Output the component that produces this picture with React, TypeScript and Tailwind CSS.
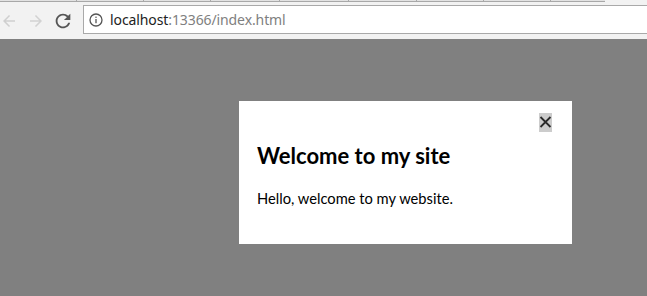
import React from "react";

const TAB_EDGES = [76, 143, 210, 279, 348, 416, 483, 550];

function BackIcon({ color }: { color: string }) {
  return (
    <svg width="18" height="18" viewBox="0 0 24 24">
      <path fill={color} d="M20 11H7.83l5.59-5.59L12 4l-8 8 8 8 1.41-1.41L7.83 13H20v-2z" />
    </svg>
  );
}

function ForwardIcon({ color }: { color: string }) {
  return (
    <svg width="18" height="18" viewBox="0 0 24 24">
      <path fill={color} d="M4 11h12.17l-5.59-5.59L12 4l8 8-8 8-1.41-1.41L16.17 13H4v-2z" />
    </svg>
  );
}

function ReloadIcon() {
  return (
    <svg width="22" height="22" viewBox="0 0 24 24">
      <path
        fill="#555"
        d="M17.65 6.35C16.2 4.9 14.21 4 12 4c-4.42 0-7.99 3.58-7.99 8s3.570 8 7.99 8c3.73 0 6.84-2.55 7.73-6h-2.08c-.82 2.33-3.04 4-5.65 4-3.31 0-6-2.69-6-6s2.69-6 6-6c1.66 0 3.14.69 4.22 1.78L13 11h7V4l-2.35 2.35z"
      />
    </svg>
  );
}

function InfoIcon() {
  return (
    <svg width="14" height="14" viewBox="0 0 14 14">
      <circle cx="7" cy="7" r="6" fill="none" stroke="#555" strokeWidth="1.3" />
      <rect x="6.35" y="6" width="1.3" height="4.2" fill="#555" />
      <rect x="6.35" y="3.6" width="1.3" height="1.3" fill="#555" />
    </svg>
  );
}

export default function App() {
  return (
    <div className="flex h-[296px] w-[647px] flex-col overflow-hidden bg-[#808080] font-['Lato',sans-serif]">

      {/* Browser chrome */}
      <div className="flex h-[39px] shrink-0 flex-col bg-[#f2f2f2]">
        {/* tab strip */}
        <div className="relative h-[2px] w-[605px] border-b border-[#a8a8a8] bg-[#e2e2e2]">
          {TAB_EDGES.map(x => (
            <div key={x} className="absolute top-0 h-[2px] w-px bg-[#a8a8a8]" style={{ left: x }} />
          ))}
        </div>

        <div className="mt-[3px] flex h-[29px] items-center">
          <div className="flex w-[83px] shrink-0 items-center pt-[3px]">
            <BackIcon color="#cfcfcf" />
            <div className="ml-[9px]">
              <ForwardIcon color="#d2d2d2" />
            </div>
            <div className="ml-[7px]">
              <ReloadIcon />
            </div>
          </div>
          <div className="flex h-full flex-1 items-center border-y border-l border-[#a9a9a9] bg-white pl-[5px] pt-[1px]">
            <InfoIcon />
            <span className="ml-[7px] font-['Noto_Sans',sans-serif] text-[14px] leading-none tracking-[-0.1px] text-[#222]">
              localhost<span className="text-[#808080]">:13366/index.html</span>
            </span>
          </div>
        </div>
      </div>

      {/* Page with dialog */}
      <div className="flex-1 pl-[239px] pt-[62px]">
        <div className="flex h-[143px] w-[333px] flex-col bg-white pl-[18px] pr-[20px] pt-[12px]">
          <div className="flex justify-end">
            <button className="flex h-[19px] w-[13px] items-center justify-center bg-[#cccccc]">
              <svg width="13" height="19" viewBox="0 0 13 19">
                <path d="M1.5 4 L11.5 14 M11.5 4 L1.5 14" stroke="#2a2a2a" strokeWidth="1.8" />
              </svg>
            </button>
          </div>
          <h1 className="mt-[10px] text-[22px] font-bold leading-[28px] text-black">Welcome to my site</h1>
          <p className="mt-[18px] text-[14.7px] leading-[20px] text-black">Hello, welcome to my website.</p>
        </div>
      </div>
    </div>
  );
}
